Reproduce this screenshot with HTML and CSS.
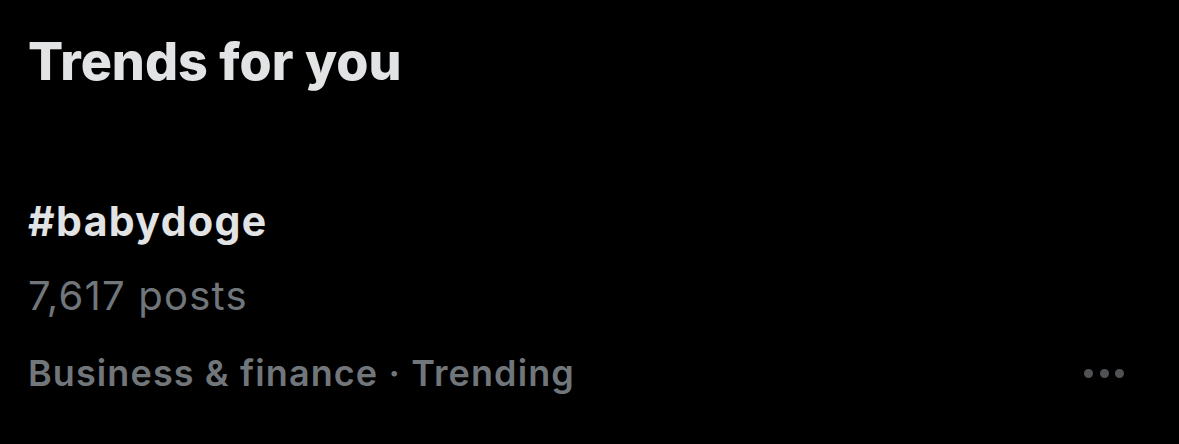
FILE: index.html
```html
<!DOCTYPE html>
<html>
<head>
<meta charset="utf-8">
<link rel="stylesheet" href="styles.css">
</head>
<body>
<div class="panel">
  <h1 class="title">Trends for you</h1>
  <div class="trend">
    <div class="trend-main">
      <div class="tag">#babydoge</div>
      <div class="count">7,617 posts</div>
      <div class="meta">Business &amp; finance · Trending</div>
    </div>
    <div class="more" aria-label="More">
      <span class="dot"></span><span class="dot"></span><span class="dot"></span>
    </div>
  </div>
</div>
</body>
</html>
```
FILE: styles.css
```css
html, body {
  margin: 0;
  padding: 0;
  background: #000;
}
body {
  width: 1179px;
  height: 444px;
  overflow: hidden;
  font-family: Inter, "Noto Sans", sans-serif;
}
.panel {
  padding: 34px 55px 0 28px;
}
.title {
  margin: 0;
  font-size: 52px;
  font-weight: 800;
  color: #e2e3e4;
  line-height: 56px;
  letter-spacing: 0;
}
.trend {
  display: flex;
  align-items: flex-end;
  justify-content: space-between;
  margin-top: 107px;
}
.trend-main {
  display: flex;
  flex-direction: column;
}
.tag {
  font-size: 41px;
  font-weight: 700;
  color: #e2e3e4;
  line-height: 48px;
  letter-spacing: 1.4px;
}
.count {
  margin-top: 27px;
  font-size: 40px;
  font-weight: 400;
  color: #71767b;
  line-height: 48px;
  letter-spacing: 1.2px;
}
.meta {
  margin-top: 31px;
  font-size: 36px;
  font-weight: 600;
  color: #71767b;
  line-height: 44px;
  letter-spacing: 1.1px;
}
.more {
  display: flex;
  gap: 6.5px;
  padding-bottom: 17.5px;
}
.dot {
  width: 9px;
  height: 9px;
  border-radius: 50%;
  background: #505356;
}
```
